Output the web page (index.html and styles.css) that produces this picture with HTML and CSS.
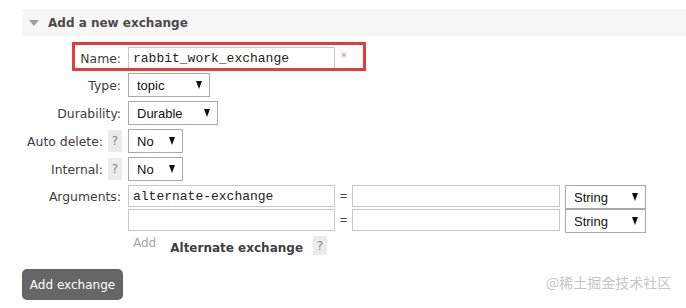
FILE: index.html
```html
<!DOCTYPE html>
<html>
<head>
<meta charset="utf-8">
<link rel="stylesheet" href="styles.css">
</head>
<body>
<div class="panel">
  <div class="panel-head">
    <span class="tri"></span>
    <h2 class="panel-title">Add a new exchange</h2>
  </div>
  <div class="form">
    <label class="lbl">Name:</label>
    <div class="ctrl">
      <input class="txt txt-name" type="text" value="rabbit_work_exchange">
      <span class="req">*</span>
    </div>

    <label class="lbl">Type:</label>
    <div class="ctrl"><div class="sel sel-type"><span>topic</span><i class="arrow"></i></div></div>

    <label class="lbl">Durability:</label>
    <div class="ctrl"><div class="sel sel-dur"><span>Durable</span><i class="arrow"></i></div></div>

    <label class="lbl">Auto delete: <span class="help">?</span></label>
    <div class="ctrl"><div class="sel sel-no"><span>No</span><i class="arrow"></i></div></div>

    <label class="lbl">Internal: <span class="help">?</span></label>
    <div class="ctrl"><div class="sel sel-no"><span>No</span><i class="arrow"></i></div></div>

    <label class="lbl lbl-args">Arguments:</label>
    <div class="ctrl args">
      <div class="arg-row">
        <input class="txt txt-key" type="text" value="alternate-exchange">
        <span class="eq">=</span>
        <input class="txt txt-val" type="text" value="">
        <div class="sel sel-str"><span>String</span><i class="arrow"></i></div>
      </div>
      <div class="arg-row">
        <input class="txt txt-key" type="text" value="">
        <span class="eq">=</span>
        <input class="txt txt-val" type="text" value="">
        <div class="sel sel-str"><span>String</span><i class="arrow"></i></div>
      </div>
      <div class="add-row">
        <span class="add">Add</span>
        <span class="alt">Alternate exchange</span>
        <span class="help help-tall">?</span>
      </div>
    </div>
  </div>
  <button class="btn" type="button">Add exchange</button>
</div>
<div class="highlight"></div>
<div class="watermark">@稀土掘金技术社区</div>
</body>
</html>
```
FILE: styles.css
```css
html, body {
  margin: 0;
  padding: 0;
  background: #fff;
}
body {
  font-family: "DejaVu Sans", Verdana, sans-serif;
  font-size: 12px;
  color: #484848;
  width: 686px;
  height: 308px;
  overflow: hidden;
  position: relative;
}
.panel {
  margin-left: 22px;
  padding-top: 9px;
}
.panel-head {
  height: 27px;
  background: #f6f6f6;
  display: flex;
  align-items: center;
}
.tri {
  width: 0;
  height: 0;
  border-left: 5px solid transparent;
  border-right: 5px solid transparent;
  border-top: 6px solid #a0a0a0;
  margin-left: 7px;
  margin-right: 9px;
  margin-top: 1px;
}
.panel-title {
  margin: 0;
  font-size: 12px;
  font-weight: bold;
  color: #4a4a4a;
}
.form {
  margin-top: 11px;
  display: grid;
  grid-template-columns: 99px auto;
  column-gap: 7px;
  row-gap: 4px;
  align-items: center;
}
.lbl {
  text-align: right;
  color: #3c3c3c;
  font-size: 12.4px;
  display: flex;
  justify-content: flex-end;
  align-items: center;
  gap: 5px;
  white-space: nowrap;
}
.lbl-args {
  align-self: start;
  height: 22px;
}
.help {
  display: inline-flex;
  align-items: center;
  justify-content: center;
  width: 14px;
  height: 22px;
  background: #ebebeb;
  color: #8a8a8a;
  font-size: 12px;
  margin-right: -1px;
}
.help-tall {
  height: 19px;
  margin-left: 10px;
}
.ctrl {
  display: flex;
  align-items: center;
}
.txt {
  box-sizing: border-box;
  height: 22px;
  border: 1px solid #c8c8c8;
  margin: 0;
  padding: 0 4px;
  font-family: "Liberation Mono", "Courier New", monospace;
  font-size: 13px;
  color: #222;
  background: #fff;
  outline: none;
}
.txt-name, .txt-key { width: 207px; }
.txt-val { width: 208px; }
.req {
  color: #f08cab;
  font-size: 12px;
  margin-left: 6px;
  align-self: flex-start;
  margin-top: 3px;
}
.sel {
  box-sizing: border-box;
  height: 24px;
  border: 1px solid #a9a9a9;
  background: #fff;
  display: flex;
  align-items: center;
  justify-content: space-between;
  padding: 0 7px 0 8px;
  font-family: "Liberation Sans", Arial, sans-serif;
  font-size: 13px;
  color: #111;
}
.sel-type { width: 82px; }
.sel-dur { width: 90px; }
.sel-no { width: 55px; }
.sel-str { width: 81px; margin-left: 5px; }
.arrow {
  width: 0;
  height: 0;
  border-left: 3.5px solid transparent;
  border-right: 3.5px solid transparent;
  border-top: 8px solid #111;
}
.args {
  flex-direction: column;
  align-items: flex-start;
}
.arg-row {
  display: flex;
  align-items: flex-start;
  height: 24px;
}
.eq {
  width: 17px;
  text-align: center;
  line-height: 22px;
  font-family: "Liberation Sans", Arial, sans-serif;
  font-size: 13px;
  color: #444;
}
.add-row {
  display: flex;
  align-items: flex-start;
  height: 20px;
  margin-top: 3px;
}
.add {
  color: #a8a8a8;
  margin-left: 5px;
  line-height: 14px;
}
.alt {
  font-weight: bold;
  color: #3f3f3f;
  margin-left: 14px;
  margin-top: 5px;
  line-height: 14px;
}
.btn {
  margin-top: 13px;
  width: 101px;
  height: 31px;
  border: none;
  border-radius: 5px;
  background: #666;
  color: #fff;
  font-family: "DejaVu Sans", Verdana, sans-serif;
  font-size: 12px;
  padding: 0;
}
.highlight {
  position: absolute;
  left: 72px;
  top: 42px;
  width: 294px;
  height: 29px;
  box-sizing: border-box;
  border: 3px solid #e23b40;
}
.watermark {
  position: absolute;
  left: 546px;
  top: 272px;
  font-family: "Noto Sans CJK SC", sans-serif;
  font-size: 14px;
  color: #c6c6c6;
  white-space: nowrap;
}
```
